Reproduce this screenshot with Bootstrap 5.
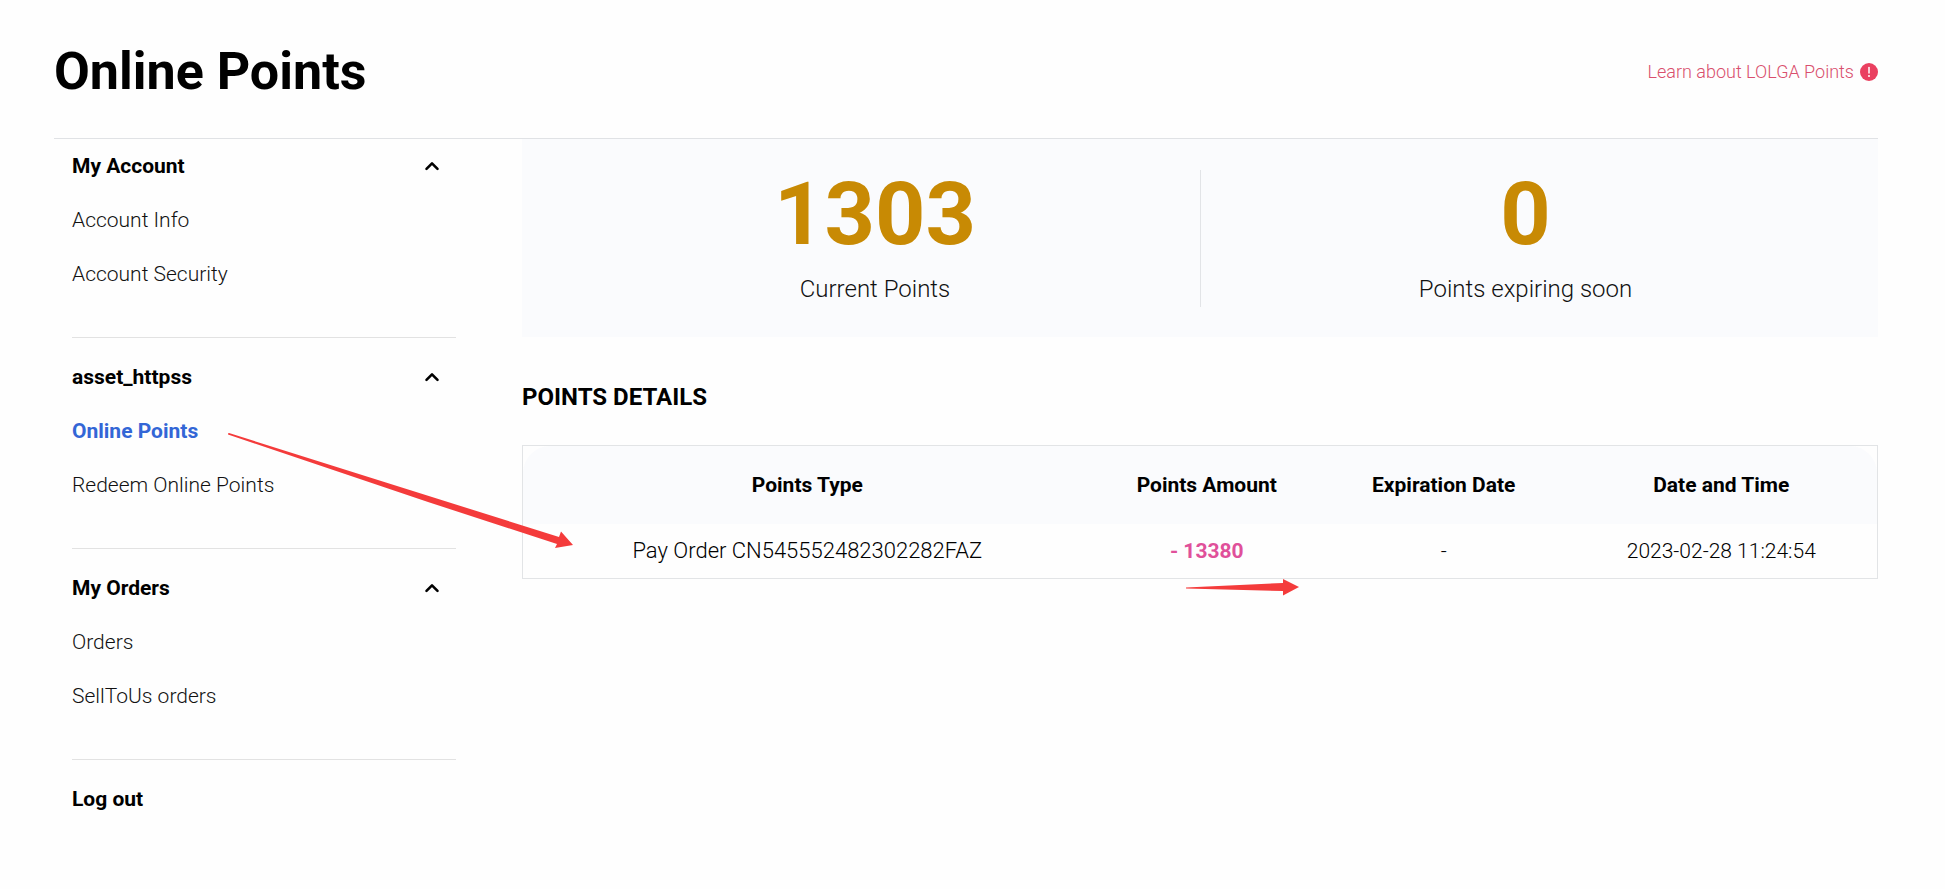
<!DOCTYPE html>
<html lang="en">
<head>
<meta charset="utf-8">
<meta name="viewport" content="width=device-width, initial-scale=1">
<title>Online Points</title>
<link href="https://cdn.jsdelivr.net/npm/bootstrap@5.3.0/dist/css/bootstrap.min.css" rel="stylesheet">
<style>
  body { font-family: Roboto, "Liberation Sans", sans-serif; font-size: 21px; font-weight: 300; line-height: 30px; color: #000; background: #fefefe; }
  a { text-decoration: none; }
  .page { padding: 0 67px 40px 54px; }
  .page-head { height: 139px; padding-top: 6px; border-bottom: 1px solid #e0e2e5; }
  .page-title { font-size: 52px; line-height: 64px; font-weight: 700; }
  .learn { gap: 6px; font-size: 18px; color: #d94f6d; }
  .side { flex: 0 0 384px; margin-left: 18px; margin-right: 66px; }
  .side-group { padding: 12px 0 36px; border-bottom: 1px solid #e2e2e2; }
  .side-group:first-child { padding-top: 0; }
  .side-group:last-child { border-bottom: 0; padding-bottom: 0; }
  .side-head, .side-link { display: flex; align-items: center; height: 54px; width: 100%; color: #111; }
  .side-head { justify-content: space-between; padding: 0 16px 0 0; border: 0; background: none; font-weight: 700; color: #000; }
  .side-link.active { font-weight: 700; color: #3366d6; }
  .summary { background: #fafbfd; padding: 31px 28px 30px; }
  .summary-item { padding: 2px 0 0; text-align: center; }
  .summary-item + .summary-item { border-left: 1px solid #e2e4e7; }
  .summary-num { font-size: 88px; line-height: 84px; font-weight: 700; color: #c88a04; }
  .summary-label { font-size: 24px; line-height: 32px; padding: 17px 0 2px; color: #111; }
  .section-title { font-size: 24px; line-height: 32px; font-weight: 700; margin: 44px 0 32px; }
  .points-box { border: 1px solid #e2e4e6; }
  .points-table { width: 100%; table-layout: fixed; text-align: center; }
  .points-table th { height: 78px; font-weight: 700; background: #fafbfd; }
  .points-table th:first-child { border-top-left-radius: 27px; width: 42%; }
  .points-table th:nth-child(2) { width: 17%; }
  .points-table th:nth-child(3) { width: 18%; }
  .points-table th:last-child { border-top-right-radius: 27px; }
  .points-table td { height: 54px; }
  .points-table .order-name { font-size: 22px; }
  .spent { font-weight: 700; color: #e0509a; }
  .pointer { position: absolute; pointer-events: none; fill: #f43b3b; }
  .pointer-order { left: -295px; top: -13px; }
  .pointer-amount { left: 49%; top: 133px; }
</style>
</head>
<body>
<div class="page">
  <header class="page-head d-flex align-items-center justify-content-between">
    <h1 class="page-title mb-0">Online Points</h1>
    <a class="learn d-flex align-items-center" href="#">Learn about LOLGA Points
      <svg width="18" height="18" viewBox="0 0 18 18" aria-hidden="true"><circle cx="9" cy="9" r="9" fill="#ea4060"/><path d="M9 4.500v5.600" stroke="#fff" stroke-width="1.500" stroke-linecap="round"/><circle cx="9" cy="13" r="1" fill="#fff"/></svg>
    </a>
  </header>

  <div class="d-flex">
    <nav class="side">
      <div class="side-group">
        <button class="side-head" type="button">My Account <svg width="16" height="10" viewBox="0 0 16 10" aria-hidden="true"><path d="M2.500 7.800 8 2.300l5.500 5.500" fill="none" stroke="#000" stroke-width="2.600" stroke-linecap="round" stroke-linejoin="round"/></svg></button>
        <a class="side-link" href="#">Account Info</a>
        <a class="side-link" href="#">Account Security</a>
      </div>
      <div class="side-group">
        <button class="side-head" type="button">asset_httpss <svg width="16" height="10" viewBox="0 0 16 10" aria-hidden="true"><path d="M2.500 7.800 8 2.300l5.500 5.500" fill="none" stroke="#000" stroke-width="2.600" stroke-linecap="round" stroke-linejoin="round"/></svg></button>
        <a class="side-link active" href="#">Online Points</a>
        <a class="side-link" href="#">Redeem Online Points</a>
      </div>
      <div class="side-group">
        <button class="side-head" type="button">My Orders <svg width="16" height="10" viewBox="0 0 16 10" aria-hidden="true"><path d="M2.500 7.800 8 2.300l5.500 5.500" fill="none" stroke="#000" stroke-width="2.600" stroke-linecap="round" stroke-linejoin="round"/></svg></button>
        <a class="side-link" href="#">Orders</a>
        <a class="side-link" href="#">SellToUs orders</a>
      </div>
      <div class="side-group">
        <a class="side-head" href="#">Log out</a>
      </div>
    </nav>

    <main class="flex-grow-1">
      <section class="summary">
        <div class="row g-0">
          <div class="summary-item col-6">
            <div class="summary-num">1303</div>
            <div class="summary-label">Current Points</div>
          </div>
          <div class="summary-item col-6">
            <div class="summary-num">0</div>
            <div class="summary-label">Points expiring soon</div>
          </div>
        </div>
      </section>

      <h2 class="section-title">POINTS DETAILS</h2>
      <div class="points-box position-relative">
        <table class="points-table">
          <thead>
            <tr><th scope="col">Points Type</th><th scope="col">Points Amount</th><th scope="col">Expiration Date</th><th scope="col">Date and Time</th></tr>
          </thead>
          <tbody>
            <tr><td class="order-name">Pay Order CN545552482302282FAZ</td><td class="spent">- 13380</td><td>-</td><td>2023-02-28 11:24:54</td></tr>
          </tbody>
        </table>
        <!-- hand-drawn pointers over the table -->
        <svg class="pointer pointer-order" width="346" height="116" viewBox="0 0 346 116" aria-hidden="true"><path d="M0 0.500 1 0 331 104 333 98.500 345 112 327 115 329 111 200 69 0 1.500Z"/></svg>
        <svg class="pointer pointer-amount" width="114" height="18" viewBox="0 0 114 18" aria-hidden="true"><path d="M0 8.500 97 4V0l16 8-16 8.500V12L0 9.500Z"/></svg>
      </div>
    </main>
  </div>
</div>
<script src="https://cdn.jsdelivr.net/npm/bootstrap@5.3.0/dist/js/bootstrap.bundle.min.js"></script>
</body>
</html>
